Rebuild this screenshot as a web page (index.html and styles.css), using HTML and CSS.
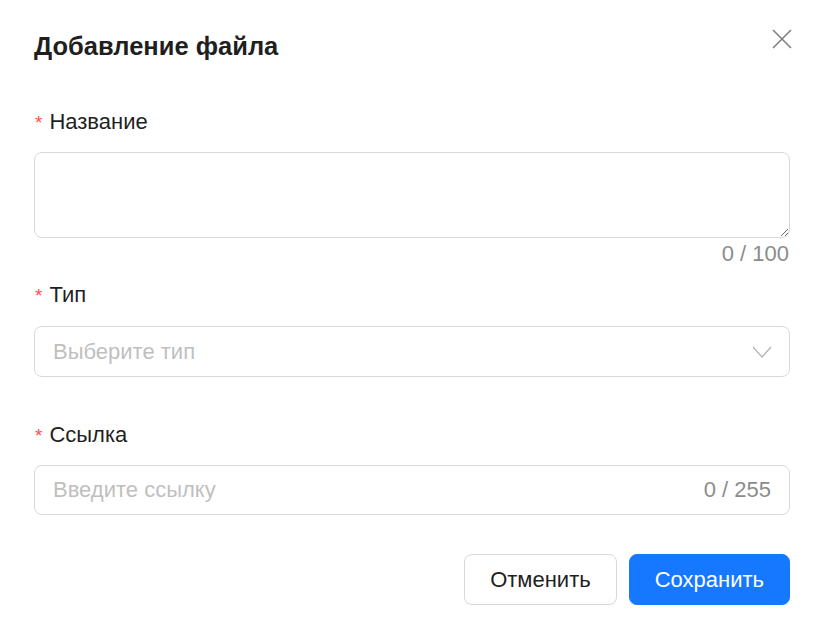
FILE: index.html
```html
<!DOCTYPE html>
<html lang="ru">
<head>
    <meta charset="UTF-8">
    <title>Добавление файла</title>
    <link rel="stylesheet" href="styles.css">
</head>
<body>
    <div class="modal">
        <div class="modal-header">
            <h2 class="modal-title">Добавление файла</h2>
            <button class="close" type="button" aria-label="Закрыть">
                <svg width="20" height="20" viewBox="0 0 20 20"><path d="M1 1 L19 19 M19 1 L1 19" stroke="#7f7f7f" stroke-width="1.6" fill="none"/></svg>
            </button>
        </div>
        <form class="form">
            <div class="item item-name">
                <label class="label"><span class="req">*</span>Название</label>
                <textarea class="textarea"></textarea>
                <div class="count">0 / 100</div>
            </div>
            <div class="item item-type">
                <label class="label"><span class="req">*</span>Тип</label>
                <div class="select">
                    <span class="placeholder">Выберите тип</span>
                    <svg width="20" height="12" viewBox="0 0 20 12"><path d="M1 1 L10 11 L19 1" stroke="#b3b3b3" stroke-width="1.2" fill="none"/></svg>
                </div>
            </div>
            <div class="item item-link">
                <label class="label"><span class="req">*</span>Ссылка</label>
                <div class="input">
                    <span class="placeholder">Введите ссылку</span>
                    <span class="suffix">0 / 255</span>
                </div>
            </div>
            <div class="footer">
                <button type="button" class="btn">Отменить</button>
                <button type="submit" class="btn btn-primary">Сохранить</button>
            </div>
        </form>
    </div>
</body>
</html>
```

FILE: styles.css
```css
body { margin: 0; background: #fff; font-family: "Liberation Sans", Arial, sans-serif; color: #1f1f1f; }
.modal { padding: 31px 34px 0; }
.modal-header { display: flex; justify-content: space-between; align-items: flex-start; height: 30px; margin-bottom: 46px; }
.modal-title { margin: 0; font-size: 25.5px; line-height: 30px; font-weight: bold; color: #1f1f1f; }
.close { border: 0; background: none; padding: 0; margin: -2px -2px 0 0; width: 20px; height: 20px; cursor: pointer; }
.close svg { display: block; }
.label { display: block; font-size: 22px; line-height: 30px; height: 30px; margin-bottom: 15px; }
.req { color: #ff4d4f; font-size: 19px; margin: 0 7px 0 1px; }
.textarea { display: block; box-sizing: border-box; width: 100%; height: 86px; border: 1px solid #d9d9d9; border-radius: 8px; resize: vertical; font: inherit; font-size: 22px; padding: 8px 18px; margin: 0; outline: none; }
.count { text-align: right; font-size: 22px; line-height: 32px; color: #8c8c8c; margin-right: 1px; }
.item-name { margin-bottom: 10px; }
.item-type .label { margin-bottom: 16px; }
.select, .input { box-sizing: border-box; display: flex; align-items: center; justify-content: space-between; height: 51px; border: 1px solid #d9d9d9; border-radius: 8px; padding: 0 18px; font-size: 22px; }
.select { padding-right: 17px; }
.select svg { margin-top: 1px; }
.item-type { margin-bottom: 43px; }
.input { height: 50px; }
.placeholder { color: #bfbfbf; }
.suffix { color: #8c8c8c; }
.footer { display: flex; justify-content: flex-end; gap: 12px; margin-top: 39px; }
.btn { height: 51px; padding: 0 25px; font-family: inherit; font-size: 22px; border-radius: 8px; border: 1px solid #d9d9d9; background: #fff; color: #1f1f1f; box-shadow: 0 2px 0 rgba(0, 0, 0, 0.02); cursor: pointer; }
.btn-primary { background: #1677ff; border-color: #1677ff; color: #fff; box-shadow: 0 2px 0 rgba(5, 145, 255, 0.1); }
```
